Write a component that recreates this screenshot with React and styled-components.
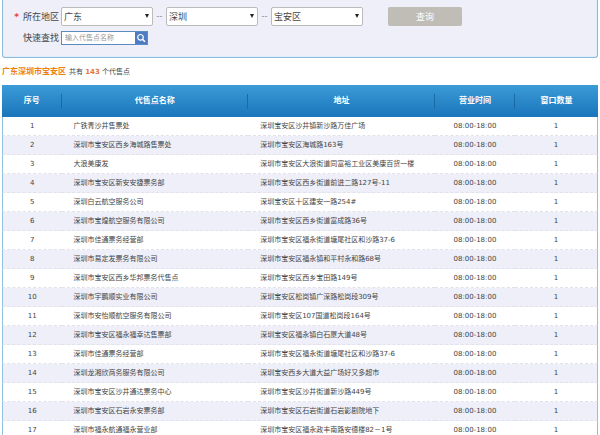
import React from 'react'
import styled, { createGlobalStyle } from 'styled-components';

const GlobalStyle = createGlobalStyle`
    html {
        scrollbar-width: none;
    }
    body {
        margin: 0;
        background-color: #fff;
        color: #444;
        font-family: "DejaVu Sans", "Noto Sans CJK SC", sans-serif;
        font-size: 7px;
        line-height: 10px;
    }
    * {
        box-sizing: border-box;
    }
`;

const Container = styled.div`
    padding: 0 2px;
`;

const SearchPanel = styled.form`
    display: flex;
    flex-direction: column;
    gap: 5px;
    padding: 7px 0 12px;
    background-color: #eeeff9;
    border: 1px solid #8fb9d6;
    border-top: none;
    border-radius: 0 0 3px 3px;
    box-shadow: inset 0 -1px 0 #d8f0fc, inset -1px 0 0 #d8f0fc;
`;

const FieldRow = styled.div`
    display: flex;
    align-items: center;
`;

const Label = styled.label`
    flex: 0 0 58px;
    padding-right: 2px;
    text-align: right;
    font-size: 9px;
    line-height: 14px;
`;

const Required = styled.span`
    margin-right: 4px;
    color: #e8423f;
    font-weight: bold;
`;

const SelectBox = styled.div`
    position: relative;
    flex: 0 1 92px;
    &::after {
        content: "";
        position: absolute;
        top: 7px;
        right: 4px;
        border: 2px solid transparent;
        border-top: 4px solid #222;
        border-bottom: none;
        pointer-events: none;
    }
`;

const Select = styled.select`
    display: block;
    appearance: none;
    width: 100%;
    height: 19px;
    padding: 0 12px 0 2px;
    border: 1px solid #bbb;
    border-radius: 2px;
    background-color: #fff;
    color: #444;
    font-family: inherit;
    font-size: 9px;
`;

const Dash = styled.span`
    flex: 0 0 13px;
    text-align: center;
    color: #888;
    font-size: 8px;
`;

const QueryButton = styled.button`
    flex: 0 1 74px;
    height: 19px;
    margin-left: 25px;
    padding: 0;
    border: none;
    border-radius: 2px;
    background-color: #bfbdb6;
    color: #fff;
    font-family: inherit;
    font-size: 9px;
`;

const SearchBox = styled.div`
    display: flex;
    width: 87px;
    height: 14px;
    border: 1px solid #5a8cc0;
    background-color: #fff;
`;

const SearchInput = styled.input`
    flex: 1;
    min-width: 0;
    padding: 0 3px;
    border: none;
    outline: none;
    background-color: transparent;
    color: #444;
    font-family: inherit;
    font-size: 7px;
    &::placeholder {
        color: #999;
    }
`;

const SearchButton = styled.button`
    display: flex;
    align-items: center;
    justify-content: center;
    flex: 0 0 12px;
    padding: 0;
    border: none;
    background-color: #4c7dc4;
    color: #fff;
`;

const Summary = styled.p`
    margin: 8px 0 7px;
    line-height: 11px;
`;

const Area = styled.strong`
    margin-right: 3px;
    color: #f08010;
    font-size: 8px;
`;

const Count = styled.strong`
    color: #e8733a;
`;

const Table = styled.table`
    width: 100%;
    table-layout: fixed;
    border-collapse: separate;
    border-spacing: 0;
`;

const HeadCell = styled.th`
    width: ${props => props.$width};
    height: 32px;
    padding: 0;
    background-image: linear-gradient(#1c69a8, #1c69a8), linear-gradient(#3b9bd8, #1a75ba);
    background-position: right center, 0 0;
    background-repeat: no-repeat;
    background-size: 1px 15px, 100% 100%;
    color: #fff;
    font-size: 8px;
    &:last-child {
        background-size: 0 0, 100% 100%;
    }
`;

const Row = styled.tr`
    &:nth-child(even) {
        background-color: #eeeff9;
    }
`;

const Cell = styled.td`
    height: 19px;
    padding: ${props => (props.$left ? '0 0 0 12px' : '0')};
    border-bottom: 1px dashed #e2e2ea;
    text-align: ${props => (props.$left ? 'left' : 'center')};
    white-space: nowrap;
    &:first-child {
        border-left: 1px solid #8fc0de;
    }
    &:last-child {
        border-right: 1px solid #8fc0de;
    }
`;

const columns = [
    { title: '序号', width: '10%' },
    { title: '代售点名称', width: '31.3%' },
    { title: '地址', width: '31.3%' },
    { title: '营业时间', width: '13.5%' },
    { title: '窗口数量', width: '13.9%' },
];

const agencies = [
    ['广铁青沙井售票处', '深圳宝安区沙井镇新沙路万佳广场'],
    ['深圳市宝安区西乡海城路售票处', '深圳市宝安区海城路163号'],
    ['大浪美康发', '深圳市宝安区大浪街道同富裕工业区美康百货一楼'],
    ['深圳市宝安区新安安捷票务部', '深圳市宝安区西乡街道前进二路127号-11'],
    ['深圳白云航空服务公司', '深圳宝安区十区建安一路254#'],
    ['深圳市宝煌航空服务有限公司', '深圳市宝安区西乡街道富成路36号'],
    ['深圳市佳通票务经营部', '深圳市宝安区福永街道塘尾社区和沙路37-6'],
    ['深圳市易定发票务有限公司', '深圳市宝安区福永镇和平村永和路68号'],
    ['深圳市宝安区西乡华邦票务代售点', '深圳市宝安区西乡宝田路149号'],
    ['深圳市宇鹏顺实业有限公司', '深圳宝安区松岗镇广深路松岗段309号'],
    ['深圳市安怡顺航空服务有限公司', '深圳市宝安区107国道松岗段164号'],
    ['深圳市宝安区福永福幸达售票部', '深圳宝安区福永镇白石厦大道48号'],
    ['深圳市佳通票务经营部', '深圳市宝安区福永街道塘尾社区和沙路37-6'],
    ['深圳龙湘欣商务服务有限公司', '深圳宝安西乡大道大益广场好又多超市'],
    ['深圳市宝安区沙井通达票务中心', '深圳市宝安区沙井街道新沙路449号'],
    ['深圳市宝安区石岩永安票务部', '深圳市宝安区石岩街道石岩影剧院地下'],
    ['深圳市福永航通福永营业部', '深圳市宝安区福永政丰南路安德楼82－1号'],
];

const AreaSelect = ({ id, label, value }) => (
    <SelectBox>
        <Select id={id} aria-label={label} defaultValue={value}>
            <option>{value}</option>
        </Select>
    </SelectBox>
);

const App = () => {
  return (
    <Container>
        <GlobalStyle />
        <SearchPanel onSubmit={e => e.preventDefault()}>
            <FieldRow>
                <Label htmlFor="province"><Required>*</Required>所在地区</Label>
                <AreaSelect id="province" value="广东" />
                <Dash>--</Dash>
                <AreaSelect id="city" label="城市" value="深圳" />
                <Dash>--</Dash>
                <AreaSelect id="district" label="区县" value="宝安区" />
                <QueryButton type="submit">查询</QueryButton>
            </FieldRow>
            <FieldRow>
                <Label htmlFor="keyword">快速查找</Label>
                <SearchBox>
                    <SearchInput id="keyword" type="text" placeholder="输入代售点名称" />
                    <SearchButton type="button" aria-label="搜索">
                        <svg width="10" height="10" viewBox="0 0 10 10" fill="none" stroke="currentColor">
                            <circle cx="4.5" cy="4.3" r="2.8" strokeWidth="1.2" />
                            <path d="M6.6 6.4 L9 8.8" strokeWidth="1.5" />
                        </svg>
                    </SearchButton>
                </SearchBox>
            </FieldRow>
        </SearchPanel>
        <Summary>
            <Area>广东深圳市宝安区</Area>共有 <Count>143</Count> 个代售点
        </Summary>
        <Table>
            <thead>
                <tr>
                    {columns.map(col => (
                        <HeadCell key={col.title} scope="col" $width={col.width}>{col.title}</HeadCell>
                    ))}
                </tr>
            </thead>
            <tbody>
                {agencies.map(([name, address], index) => (
                    <Row key={index}>
                        <Cell>{index + 1}</Cell>
                        <Cell $left>{name}</Cell>
                        <Cell $left>{address}</Cell>
                        <Cell>08:00-18:00</Cell>
                        <Cell>1</Cell>
                    </Row>
                ))}
            </tbody>
        </Table>
    </Container>
  )
}


export default App;
